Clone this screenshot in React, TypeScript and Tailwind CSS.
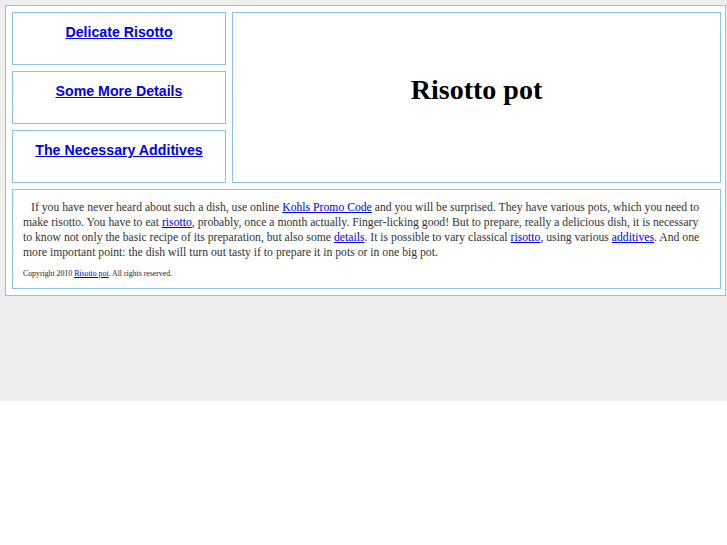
export default function App() {
  const box = 'border border-[#8cc4e2] bg-white'
  const navLinks = ['Delicate Risotto', 'Some More Details', 'The Necessary Additives']

  return (
    <div className="w-full bg-white" style={{ fontFamily: '"Liberation Serif", serif' }}>
      <div className="h-[401px] bg-[#eeeeee] pt-[5px]">
        <div className={`${box} ml-[5px] w-[721px] pl-[6px] pr-[4px] py-[6px]`}>
          <div className="flex gap-[6px]">
            {/* left nav */}
            <div className="flex w-[214px] flex-col gap-[6px]">
              {navLinks.map((t) => (
                <div key={t} className={`${box} h-[53px] pt-[7px] text-center`}>
                  <a
                    href="#"
                    className="text-[14.2px] font-bold text-[#0000ee] underline"
                    style={{ fontFamily: '"Liberation Sans", Arial, sans-serif' }}
                  >
                    {t}
                  </a>
                </div>
              ))}
            </div>
            {/* header */}
            <div className={`${box} w-[489px] pt-[61px] text-center`}>
              <h1 className="text-[28px] font-bold text-black leading-[32px]">Risotto pot</h1>
            </div>
          </div>

          {/* content */}
          <div className={`${box} mt-[6px] w-[709px] p-[10px] text-[#333333]`}>
            <p className="indent-[8px] text-[11.7px] leading-[15px]">
              If you have never heard about such a dish, use online{' '}
              <a href="#" className="text-[#0000ee] underline">Kohls Promo Code</a> and you will be
              surprised. They have various pots, which you need to make risotto. You have to eat{' '}
              <a href="#" className="text-[#0000ee] underline">risotto</a>, probably, once a month
              actually. Finger-licking good! But to prepare, really a delicious dish, it is necessary
              to know not only the basic recipe of its preparation, but also some{' '}
              <a href="#" className="text-[#0000ee] underline">details</a>. It is possible to vary
              classical <a href="#" className="text-[#0000ee] underline">risotto</a>, using various{' '}
              <a href="#" className="text-[#0000ee] underline">additives</a>. And one more important
              point: the dish will turn out tasty if to prepare it in pots or in one big pot.
            </p>
            <p className="mt-[9px] text-[7.8px] leading-[9px] text-[#222222]">
              Copyright 2010 <a href="#" className="text-[#0000ee] underline">Risotto pot</a>. All rights
              reserved.
            </p>
          </div>
        </div>
      </div>
    </div>
  )
}
